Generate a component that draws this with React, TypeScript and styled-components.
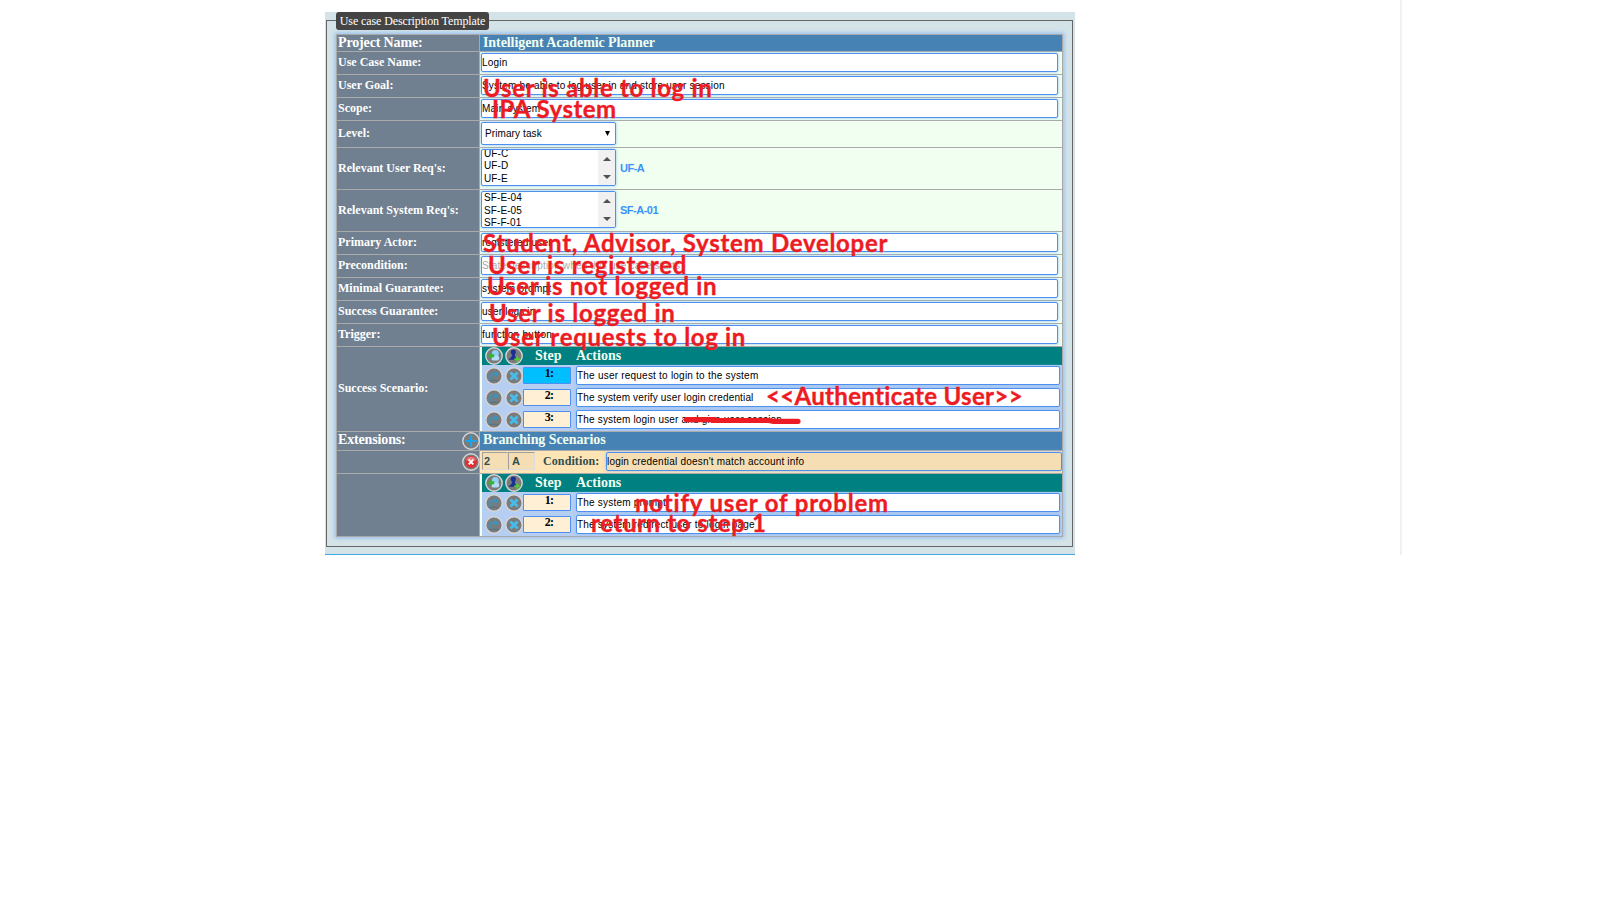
import React from 'react';
import styled, { createGlobalStyle, css } from 'styled-components';

const Global = createGlobalStyle`
  * { box-sizing: border-box; }
  body { margin: 0; background: #fff; font-family: "Liberation Serif", "Times New Roman", serif; }
`;

const Page = styled.main`
  position: relative;
  width: 1375px;
  height: 900px;
  padding: 12px 0 0 325px;
`;

const PageEdge = styled.div`
  position: absolute;
  left: 1400px;
  top: 0;
  width: 2px;
  height: 555px;
  background: #f1f1f1;
`;

const Panel = styled.section`
  width: 750px;
  height: 543px;
  padding: 8px 2px 0 1px;
  background: #d4e3e7;
  border-bottom: 1px solid #3fabdf;
`;

const Frame = styled.div`
  position: relative;
  width: 747px;
  height: 527px;
  border: 1px solid #666;
  padding: 13px 9px 0;
`;

const Legend = styled.h1`
  position: absolute;
  left: 9px;
  top: -9px;
  margin: 0;
  width: 153px;
  height: 18px;
  border-radius: 3px;
  background: #444;
  color: #fff;
  font-size: 12px;
  font-weight: 400;
  line-height: 18px;
  letter-spacing: -0.11px;
  text-align: center;
  white-space: nowrap;
`;

const Form = styled.div`
  width: 727px;
  border: 1px solid #a9a9a9;
  background: #a9a9a9;
  display: flex;
  flex-direction: column;
  gap: 1px;
  box-shadow: 0 0 4px 1px #8fbdf0;
`;

const Row = styled.div<{ $h: number }>`
  display: grid;
  grid-template-columns: 142px 582px;
  column-gap: 1px;
  height: ${(p) => p.$h}px;
`;

const Label = styled.div<{ $big?: boolean; $top?: number }>`
  display: flex;
  justify-content: space-between;
  background: #708090;
  color: #fff;
  font-weight: 700;
  font-size: ${(p) => (p.$big ? 14 : 12)}px;
  letter-spacing: ${(p) => (p.$big ? -0.15 : 0)}px;
  line-height: 16px;
  padding: ${(p) => p.$top ?? 2}px 0 0 1px;
  white-space: nowrap;
`;

const Value = styled.div<{ $tone?: string }>`
  display: flex;
  align-items: flex-start;
  background: ${(p) => p.$tone ?? '#f0fff0'};
  padding: 1px 0 0 1px;
`;

const Banner = styled.div`
  background: #4682b4;
  color: #f0fff0;
  font-weight: 700;
  font-size: 14px;
  letter-spacing: -0.08px;
  line-height: 16px;
  padding-left: 3px;
`;

const glow = css`
  border: 1px solid #4d90f0;
  border-radius: 2px;
  box-shadow: 0 0 3px #8fbdf0;
`;

const sans = css`
  font-family: "Liberation Sans", Arial, sans-serif;
  font-size: 10px;
`;

const Field = styled.div<{ $w?: number; $bg?: string; $muted?: boolean; $ls?: number }>`
  ${glow}
  ${sans}
  width: ${(p) => p.$w ?? 577}px;
  height: 19px;
  line-height: 18px;
  background: ${(p) => p.$bg ?? '#fff'};
  color: ${(p) => (p.$muted ? '#a9a9a9' : '#000')};
  letter-spacing: ${(p) => p.$ls ?? 0.2}px;
  white-space: nowrap;
`;

const Select = styled.div`
  ${glow}
  ${sans}
  width: 135px;
  height: 23px;
  padding: 0 5px 0 3px;
  background: #fff;
  display: flex;
  align-items: center;
  justify-content: space-between;
  letter-spacing: 0.1px;
`;

const ListBox = styled.div`
  ${glow}
  ${sans}
  width: 135px;
  height: 37px;
  background: #fff;
  display: flex;
  justify-content: space-between;
  overflow: hidden;
`;

const Options = styled.div<{ $shift: number }>`
  margin-top: ${(p) => p.$shift}px;
  padding-left: 2px;
  line-height: 12.6px;
  letter-spacing: 0.1px;
`;

const ScrollBar = styled.div`
  width: 17px;
  height: 35px;
  background: #f1f1f1;
  display: flex;
  flex-direction: column;
  align-items: center;
  justify-content: space-between;
  padding: 7px 0 6px;
`;

const Chosen = styled.span`
  align-self: center;
  margin: 0 0 2px 4px;
  ${sans}
  font-size: 11px;
  letter-spacing: -0.5px;
  font-weight: 700;
  color: #3a92fa;
`;

const Steps = styled.div`
  margin-left: 1px;
  width: 580px;
  height: 100%;
  background: #b5cef2;
`;

const StepsCell = styled.div`
  background: #f0fff0;
  padding-left: 1px;
`;

const StepLine = styled.div`
  display: flex;
  align-items: flex-start;
  height: 22px;
  padding: 1px 0 0 3px;
`;

const StepHead = styled(StepLine)`
  height: 18px;
  padding-top: 0;
  background: #008080;
  color: #f0fff0;
  font-weight: 700;
  font-size: 14px;
  line-height: 17px;
`;

const IconPair = styled.div<{ $drop?: number }>`
  display: flex;
  gap: 2px;
  width: 38px;
  padding-top: ${(p) => p.$drop ?? 0}px;
`;

const StepNo = styled.div<{ $active?: boolean }>`
  width: 48px;
  height: 17px;
  margin: 1px 5px 0 0;
  border: 1px solid #4d90f0;
  border-radius: 1px;
  background: ${(p) => (p.$active ? '#00bfff' : '#ffefd5')};
  color: #000;
  font-size: 12px;
  font-weight: 700;
  line-height: 11px;
  letter-spacing: -0.8px;
  text-align: center;
  padding-left: 4px;
`;

const StepTitle = styled.span`
  width: 53px;
  padding-left: 12px;
`;

const CodeBox = styled.div<{ $w: number; $pad: number; $first?: boolean }>`
  ${sans}
  width: ${(p) => p.$w}px;
  height: 18px;
  margin-left: ${(p) => (p.$first ? 1 : 0)}px;
  font-size: 11px;
  font-weight: 700;
  color: #2f4f4f;
  line-height: 16px;
  padding-left: ${(p) => p.$pad}px;
  background: #f5deb3;
  border: 1px solid #dcdcdc;
  border-top-color: #a0a0a0;
  border-left-color: #a0a0a0;
`;

const ConditionLabel = styled.span`
  width: 71px;
  padding-left: 8px;
  color: #2f4f4f;
  font-weight: 700;
  font-size: 12px;
  line-height: 18px;
  letter-spacing: 0.1px;
`;

const Note = styled.div<{ $x: number; $y: number; $ls: number }>`
  position: absolute;
  left: ${(p) => p.$x}px;
  top: ${(p) => p.$y}px;
  font-family: Lato, "Open Sans", sans-serif;
  font-weight: 700;
  font-size: 24px;
  line-height: 28px;
  letter-spacing: ${(p) => p.$ls}px;
  font-variant-ligatures: none;
  -webkit-text-stroke: 0.35px #ed1c24;
  color: #ed1c24;
  white-space: nowrap;
`;

const Strike = styled.svg`
  position: absolute;
  left: 680px;
  top: 414px;
`;

type IconKind = 'globe' | 'user' | 'redo' | 'cross' | 'plus' | 'delete';

const IconSvg = styled.svg`
  flex: none;
`;

const Icon = ({ kind }: { kind: IconKind }) => (
  <IconSvg width="18" height="18" viewBox="0 0 18 18">
    <circle cx="9" cy="9" r="8.2" fill="#7b7b7b" stroke="#d6d6d6" strokeWidth="1.4" />
    {kind === 'globe' && (
      <>
        <circle cx="10.3" cy="6.4" r="3.5" fill="#8fd0f5" />
        <rect x="6" y="8.4" width="8.2" height="5" rx="2.2" fill="#b4dcf8" />
        <path d="M3 8.6 7 5.2v2h2.2v3H7v2.2z" fill="#35b52a" />
      </>
    )}
    {kind === 'user' && (
      <>
        <circle cx="8.3" cy="5" r="2.6" fill="#1b2f96" />
        <path d="M7 6.8h2.8l.2 2.4 2.6 3.6H3.4l3.4-3.4z" fill="#1b2f96" />
        <path d="M12.3 9.2v6M9.3 12.2h6" stroke="#4fd02e" strokeWidth="1.8" />
      </>
    )}
    {kind === 'redo' && (
      <>
        <path d="M5.2 12.8C3.2 8 6 5.8 11 7" fill="none" stroke="#3d93bb" strokeWidth="1.9" />
        <path d="M9.6 3.2 14 7.2 9.6 10.8z" fill="#3d93bb" />
        <path d="M4.5 13.3h9" stroke="#4d7488" />
      </>
    )}
    {kind === 'cross' && (
      <path d="m5.4 5.4 7.2 7.2m0-7.2-7.2 7.2" stroke="#45bdec" strokeWidth="2.8" />
    )}
    {kind === 'plus' && <path d="M9 3.2v11.6M3.2 9h11.6" stroke="#1ba4ee" strokeWidth="2.2" />}
    {kind === 'delete' && (
      <>
        <circle cx="9" cy="9" r="6" fill="#e02f35" />
        <path d="M4 7a5.4 5.4 0 0 1 10 0Q9 9 4 7z" fill="#f07a7c" />
        <path d="m6.7 6.7 4.6 4.6m0-4.6-4.6 4.6" stroke="#fff" strokeWidth="1.9" />
      </>
    )}
  </IconSvg>
);

const RowTool = styled.span<{ $drop?: number }>`
  display: flex;
  margin: ${(p) => p.$drop ?? 0}px -0.5px 0 0;
`;

const Arrow = ({ up }: { up?: boolean }) => (
  <svg width="8" height="4" viewBox="0 0 8 4">
    <path d={up ? 'M0 4h8L4 0z' : 'M0 0h8L4 4z'} fill="#505050" />
  </svg>
);

const TextRow = ({ label, text, muted, ls }: { label: string; text: string; muted?: boolean; ls?: number }) => (
  <Row $h={22}>
    <Label>{label}</Label>
    <Value>
      <Field $muted={muted} $ls={ls}>{text}</Field>
    </Value>
  </Row>
);

const ListRow = ({ label, options, shift, chosen }: { label: string; options: string[]; shift: number; chosen: string }) => (
  <Row $h={41}>
    <Label $top={12}>{label}</Label>
    <Value>
      <ListBox>
        <Options $shift={shift}>
          {options.map((o) => <div key={o}>{o}</div>)}
        </Options>
        <ScrollBar><Arrow up /><Arrow /></ScrollBar>
      </ListBox>
      <Chosen>{chosen}</Chosen>
    </Value>
  </Row>
);

type Step = { text: string; ls?: number };

const StepTable = ({ steps, active }: { steps: Step[]; active?: number }) => (
  <StepsCell>
    <Steps>
      <StepHead>
        <IconPair><Icon kind="globe" /><Icon kind="user" /></IconPair>
        <StepTitle>Step</StepTitle>
        <span>Actions</span>
      </StepHead>
      {steps.map((s, i) => (
        <StepLine key={s.text}>
          <IconPair $drop={1}><Icon kind="redo" /><Icon kind="cross" /></IconPair>
          <StepNo $active={active === i}>{i + 1}:</StepNo>
          <Field $w={484} $ls={s.ls}>{s.text}</Field>
        </StepLine>
      ))}
    </Steps>
  </StepsCell>
);

const notes = [
  { x: 483, y: 74, ls: 0.7, text: 'User is able to log in' },
  { x: 492, y: 95, ls: 0.5, text: 'IPA System' },
  { x: 483, y: 229, ls: 0.71, text: 'Student, Advisor, System Developer' },
  { x: 488, y: 251, ls: 0.8, text: 'User is registered' },
  { x: 487, y: 272, ls: 0.68, text: 'User is not logged in' },
  { x: 489, y: 299, ls: 0.73, text: 'User is logged in' },
  { x: 492, y: 323, ls: 0.68, text: 'User requests to log in' },
  { x: 766, y: 382, ls: 0.33, text: '<<Authenticate User>>' },
  { x: 635, y: 489, ls: 0.83, text: 'notify user of problem' },
  { x: 591, y: 509, ls: 0.58, text: 'return to step 1' },
];

export default function App() {
  return (
    <Page>
      <Global />
      <Panel>
        <Frame>
          <Legend>Use case Description Template</Legend>
          <Form>
            <Row $h={16}>
              <Label $big $top={0}>Project Name:</Label>
              <Banner>Intelligent Academic Planner</Banner>
            </Row>
            <TextRow label="Use Case Name:" text="Login" />
            <TextRow label="User Goal:" text="System be able to log user in and store user session" />
            <TextRow label="Scope:" text="Main system" />
            <Row $h={26}>
              <Label $top={4}>Level:</Label>
              <Value>
                <Select>
                  Primary task
                  <svg width="5" height="5" viewBox="0 0 5 5"><path d="M0 0h5L2.5 5z" /></svg>
                </Select>
              </Value>
            </Row>
            <ListRow label="Relevant User Req's:" options={['UF-C', 'UF-D', 'UF-E']} shift={-2.5} chosen="UF-A" />
            <ListRow label="Relevant System Req's:" options={['SF-E-04', 'SF-E-05', 'SF-F-01']} shift={0} chosen="SF-A-01" />
            <TextRow label="Primary Actor:" text="registered user" />
            <TextRow label="Precondition:" text="State description when this use case starts" muted />
            <TextRow label="Minimal Guarantee:" text="system prompt" ls={0.3} />
            <TextRow label="Success Guarantee:" text="user logs in" />
            <TextRow label="Trigger:" text="function button" ls={0.3} />
            <Row $h={84}>
              <Label $top={33}>Success Scenario:</Label>
              <StepTable
                active={0}
                steps={[
                  { text: 'The user request to login to the system', ls: 0.22 },
                  { text: 'The system verify user login credential', ls: 0.15 },
                  { text: 'The system login user and give user session', ls: 0.18 },
                ]}
              />
            </Row>
            <Row $h={18}>
              <Label $big $top={0}>Extensions:<RowTool><Icon kind="plus" /></RowTool></Label>
              <Banner>Branching Scenarios</Banner>
            </Row>
            <Row $h={22}>
              <Label $top={1}><span /><RowTool $drop={1}><Icon kind="delete" /></RowTool></Label>
              <Value $tone="#ffe4b5">
                <CodeBox $w={26} $pad={1} $first>2</CodeBox>
                <CodeBox $w={27} $pad={3}>A</CodeBox>
                <ConditionLabel>Condition:</ConditionLabel>
                <Field $w={456} $bg="#f5deb3">login credential doesn't match account info</Field>
              </Value>
            </Row>
            <Row $h={62}>
              <Label />
              <StepTable steps={[{ text: 'The system prompt' }, { text: 'The system redirect user to login page' }]} />
            </Row>
          </Form>
        </Frame>
      </Panel>
      <PageEdge />
      {notes.map((n) => <Note key={n.text} $x={n.x} $y={n.y} $ls={n.ls}>{n.text}</Note>)}
      <Strike width="124" height="14">
        <path d="M6.5 5.7h27v.8h55l5 .8h24.5" fill="none" stroke="#ed1c24" strokeWidth="5.2" strokeLinecap="round" />
      </Strike>
    </Page>
  );
}
